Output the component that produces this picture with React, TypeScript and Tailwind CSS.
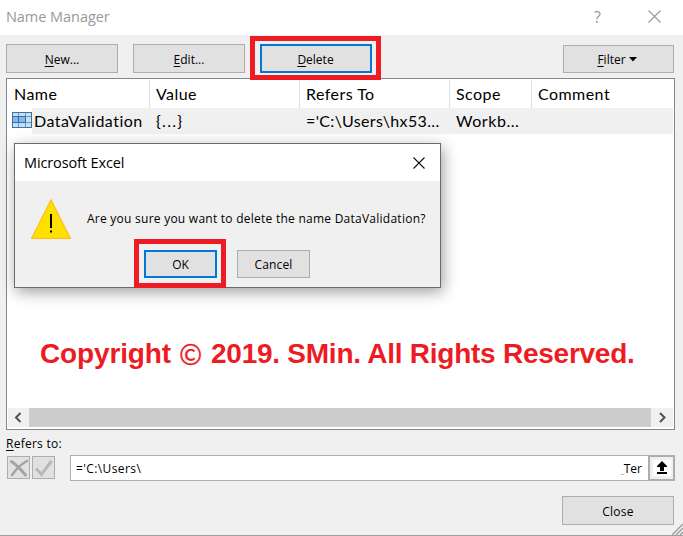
import type { ReactNode } from "react";

const ui = "font-['Open_Sans','Noto_Sans',sans-serif]";

function Button({ children, className = "", focused = false }: { children: ReactNode; className?: string; focused?: boolean }) {
  return (
    <button
      className={`flex shrink-0 items-center justify-center bg-[#e1e1e1] text-[12px] leading-[16px] text-black ${
        focused ? "border-2 border-[#0078d7]" : "border border-[#adadad]"
      } ${className}`}
    >
      {children}
    </button>
  );
}

function Key({ children }: { children: ReactNode }) {
  return <span className="underline decoration-1 underline-offset-2">{children}</span>;
}

function TableIcon() {
  return (
    <svg width="20" height="16" viewBox="0 0 20 16" shapeRendering="crispEdges">
      <rect width="20" height="16" fill="#41719c" />
      <rect x="1" y="1" width="18" height="14" fill="#c5dff3" />
      <rect x="1" y="5" width="13" height="6" fill="#86b9e8" />
      <path d="M1 4.500h18M1 10.500h18M6.500 1v14M13.500 1v14" stroke="#7099bd" fill="none" />
      <path d="M1 4.500h12.500v6H1M6.500 5v5" stroke="#2873b8" fill="none" />
    </svg>
  );
}

function Dialog() {
  return (
    <div className="absolute left-[14px] top-[143px] flex h-[145px] w-[427px] flex-col border border-[#6b6b6b] bg-[#f0f0f0] shadow-[2px_4px_14px_rgba(0,0,0,0.38)]">
      <div className="flex h-[37px] shrink-0 items-center justify-between bg-white pl-[9px] pr-[15px]">
        <span className="text-[14.5px] leading-[20px] tracking-[-0.12px]">Microsoft Excel</span>
        <svg width="12" height="12" viewBox="0 0 12 12" fill="none" stroke="#111" strokeWidth="1.100">
          <path d="M0.500 0.500 11.500 11.500M11.500 0.500 0.500 11.500" />
        </svg>
      </div>
      <div className="flex h-[69px] items-center pl-4 pt-[7px]">
        <svg width="40" height="40" viewBox="0 0 40 40">
          <path d="M20 1 39.300 39.300H.7Z" fill="#ffe100" stroke="#fdbf1e" strokeWidth="1.300" />
          <path d="M19 15h2v14h-2zM19 31.500h2v2h-2z" fill="#000" />
        </svg>
        <span className="ml-4 whitespace-nowrap text-[12px] leading-4 tracking-[0.25px]">
          Are you sure you want to delete the name DataValidation?
        </span>
      </div>
      <div className="flex gap-5 pl-[129px]">
        <div className="relative">
          <Button focused className="h-[28px] w-[73px] pt-px">OK</Button>
          <div className="absolute -left-[10px] -top-[11px] h-[49px] w-[92px] border-[5px] border-[#ed1c24]" />
        </div>
        <Button className="h-[28px] w-[73px] pt-px tracking-[0.15px]">Cancel</Button>
      </div>
    </div>
  );
}

const columns = [
  { title: "Name", cls: "w-[143px] pl-[7px] border-r" },
  { title: "Value", cls: "w-[150px] pl-[6px] border-r" },
  { title: "Refers To", cls: "w-[150px] pl-[6px] border-r" },
  { title: "Scope", cls: "w-[82px] pl-[6px] border-r" },
  { title: "Comment", cls: "w-[142px] pl-[6px]" },
];

export default function App() {
  return (
    <div className={`${ui} relative flex h-[536px] w-[683px] flex-col overflow-hidden border-b border-[#a0a0a0] bg-[#f0f0f0] text-black`}>
      <header className="flex h-[35px] shrink-0 items-center bg-white pb-[2px] pl-[6px] pr-[22px] text-[#999]">
        <span className="text-[14.5px] leading-[20px] tracking-[-0.05px]">Name Manager</span>
        <span className="ml-auto mr-[47px] text-[16px] leading-5">?</span>
        <svg width="13" height="13" viewBox="0 0 13 13" fill="none" stroke="#999" strokeWidth="1.100">
          <path d="M.5.5 12.500 12.500M12.500.5.5 12.500" />
        </svg>
      </header>

      <div className="flex h-[43px] shrink-0 pl-[6px] pr-[9px] pt-[9px]">
        <Button className="h-[29px] w-[112px] pt-[2px]"><Key>N</Key>ew...</Button>
        <Button className="ml-[15px] h-[29px] w-[112px] pt-[2px]"><Key>E</Key>dit...</Button>
        <div className="relative z-10 ml-[15px]">
          <Button focused className="h-[29px] w-[112px] pr-px pt-[2px]"><Key>D</Key>elete</Button>
          <div className="absolute -left-[10px] -top-[8px] h-[44px] w-[131px] border-[5px] border-[#ed1c24]" />
        </div>
        <Button className="ml-auto mt-px h-[28px] w-[111px] pr-[3px] pt-px">
          <Key>F</Key>ilter
          <svg className="ml-[3px]" width="8" height="5" viewBox="0 0 8 5"><path d="M0 0h8L4 4.500Z" /></svg>
        </Button>
      </div>

      <main className="ml-[6px] flex h-[352px] w-[669px] shrink-0 flex-col border border-[#828790] bg-white font-['Lato','Open_Sans',sans-serif] text-[16px]">
        <div className="flex h-[29px] shrink-0 pt-px">
          {columns.map((c) => (
            <div key={c.title} className={`flex shrink-0 items-center border-[#e0e0e0] leading-5 tracking-[0.45px] ${c.cls}`}>
              {c.title}
            </div>
          ))}
        </div>
        <div className="flex h-[26px] shrink-0 items-center pl-[5px] pr-px leading-5">
          <div className="-mt-[3px] shrink-0">
            <TableIcon />
          </div>
          <div className="flex h-[26px] flex-1 items-center bg-[#f0f0f0] pl-[2px]">
            <span className="w-[122px] shrink-0 tracking-[0.47px]">DataValidation</span>
            <span className="w-[150px] shrink-0 tracking-[1.3px]">{"{...}"}</span>
            <span className="w-[150px] shrink-0 tracking-[0.35px]">='C:\Users\hx53...</span>
            <span className="tracking-[0.55px]">Workb...</span>
          </div>
        </div>
        <div className="mt-[203px] flex h-[34px] items-center whitespace-nowrap pl-[33px] font-['Liberation_Sans',Arial,sans-serif] text-[28px] font-bold leading-[34px] tracking-[-0.25px] text-[#ed1c24]">
          <span className="w-[139px] tracking-[-0.15px]">Copyright</span>
          <span className="w-[32px] pb-[3px] font-['Noto_Sans_CJK_KR',sans-serif] text-[28px] font-normal [-webkit-text-stroke:0.3px_#ed1c24]">©</span>
          <span>2019. SMin. All Rights Reserved.</span>
        </div>
        <div className="mb-[2px] ml-px mr-px mt-auto flex h-[19px] items-center bg-[#f0f0f0]">
          <svg width="21" height="19" viewBox="0 0 21 19" fill="none" stroke="#505050" strokeWidth="2"><path d="M12.500 5 8 9.500l4.500 4.500" /></svg>
          <div className="h-full w-[622px] bg-[#cdcdcd]" />
          <svg width="22" height="19" viewBox="0 0 22 19" fill="none" stroke="#505050" strokeWidth="2"><path d="M9 5l4.500 4.500L9 14" /></svg>
        </div>
      </main>

      <div className="h-[25px] shrink-0 pl-[6px] pt-[6px] text-[12px] leading-4 tracking-[0.25px]"><Key>R</Key>efers to:</div>

      <div className="flex h-[26px] shrink-0 pl-[7px]">
        <div className="mt-px flex h-[23px] w-[23px] items-center justify-center border border-[#adadad] bg-[#e1e1e1]">
          <svg width="20" height="20" viewBox="0 0 20 20" fill="none" stroke="#a3a3a3" strokeLinecap="round">
            <path d="M2.500 3.500Q8 7 16.500 17" strokeWidth="3" /><path d="M18 3Q10 7 3 17" strokeWidth="2.500" />
          </svg>
        </div>
        <div className="ml-[2px] mt-px flex h-[23px] w-[23px] items-center justify-center border border-[#adadad] bg-[#e1e1e1]">
          <svg width="20" height="20" viewBox="0 0 20 20" fill="none" stroke="#b8b8b8" strokeWidth="3"><path d="M2 10.500 7.500 16.500 17.500 3" /></svg>
        </div>
        <div className="ml-[15px] flex w-[578px] items-center justify-between border border-r-0 border-[#adadad] bg-white pl-[5px] pr-[6px] pt-px text-[12px] leading-4">
          <span className="tracking-[0.4px]">='C:\Users\</span>
          <span className="flex items-end"><span className="text-[6px] leading-[10px]">_</span><span>Ter</span></span>
        </div>
        <div className="flex w-[27px] items-center justify-center border-2 border-[#adadad] bg-[#f0f0f0]">
          <svg width="18" height="16" viewBox="0 0 18 16"><path d="M0 0h18v16H0Z" fill="#fff" /><path d="M9 1 14 6v1h-3v4H7V7H4V6ZM4 12h10v2H4Z" /></svg>
        </div>
      </div>

      <div className="flex justify-end pr-[9px] pt-[15px]">
        <Button className="h-[29px] w-[112px] pt-[2px] tracking-[0.2px]">Close</Button>
      </div>
      <svg className="absolute bottom-0 right-0" width="11" height="11" viewBox="0 0 11 11" stroke="#a0a0a0" strokeWidth="1.500"><path d="M0 11 11 0M4 11 11 4M8 11 11 8" /></svg>

      <Dialog />
    </div>
  );
}
